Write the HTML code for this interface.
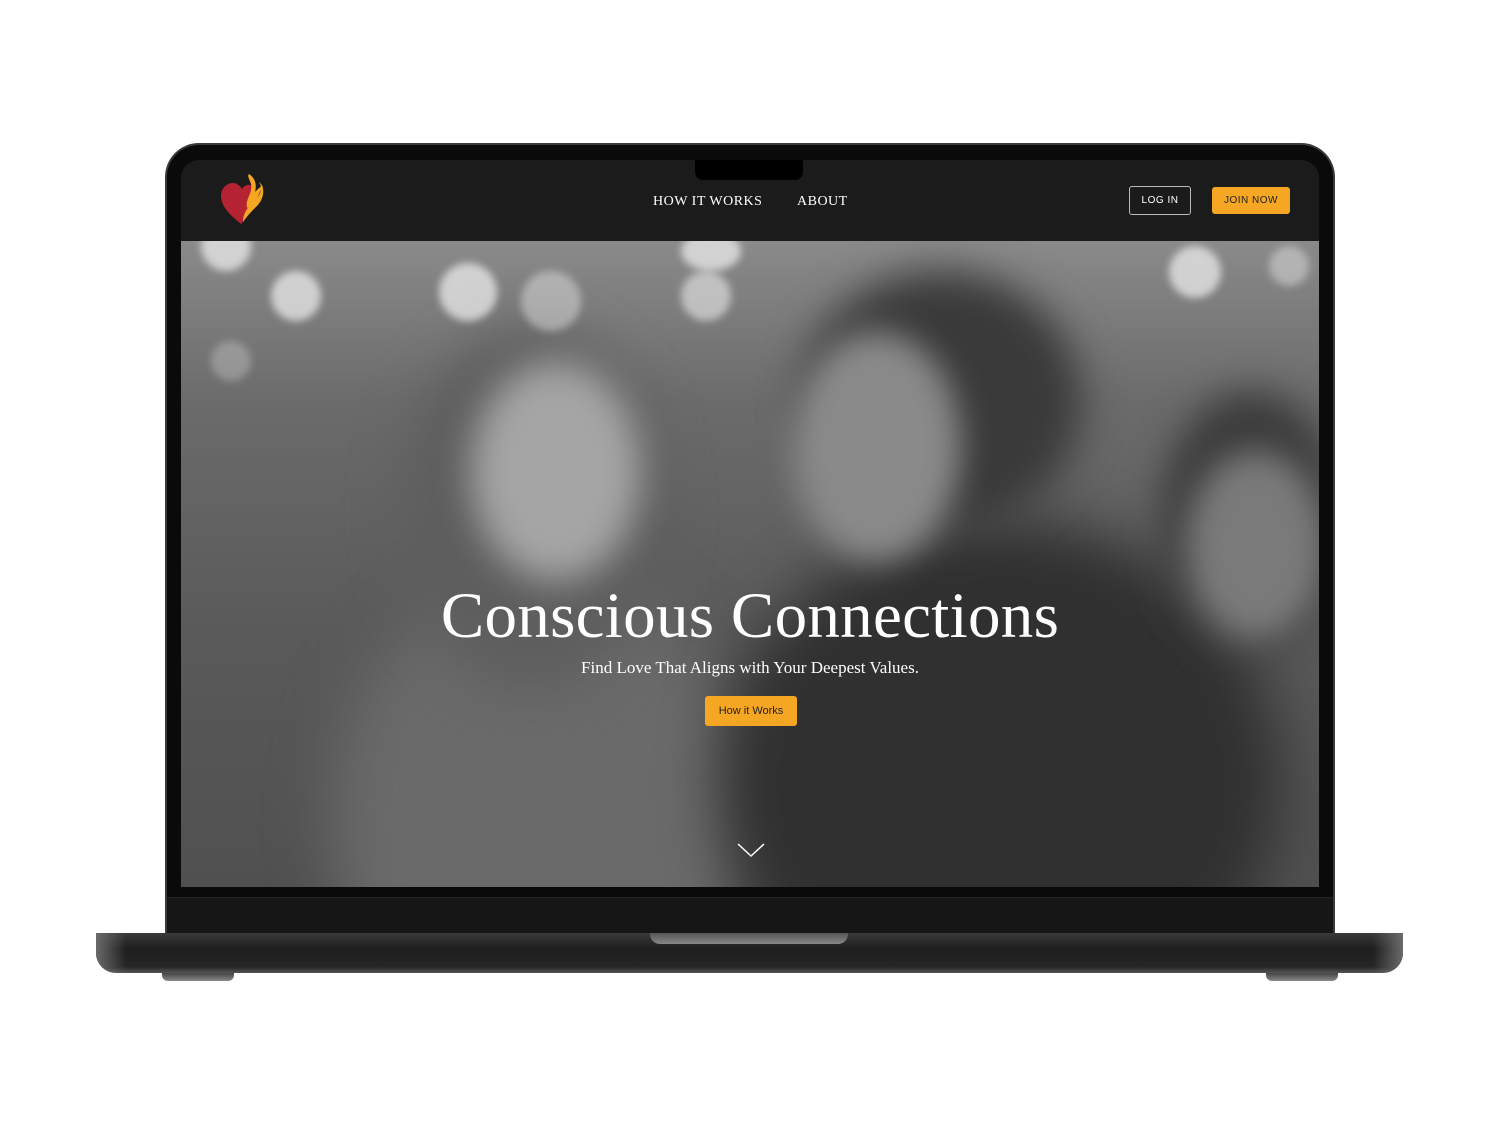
<!DOCTYPE html>
<html><head><meta charset="utf-8"><style>
*{margin:0;padding:0;box-sizing:border-box}
body{width:1500px;height:1125px;background:#fff;position:relative;overflow:hidden;font-family:"Liberation Sans",sans-serif}
.lid{position:absolute;left:165px;top:143px;width:1170px;height:792px;background:#0a0a0a;border-radius:34px 34px 0 0;border:2px solid #3a3a3a;border-bottom:none}
.screen{position:absolute;left:181px;top:160px;width:1138px;height:727px;border-radius:18px 18px 0 0;overflow:hidden;background:#1b1b1b}
.nav{position:absolute;left:0;top:0;width:100%;height:81px;background:#1b1b1b}
.notch{position:absolute;left:514px;top:0;width:108px;height:20px;background:#000;border-radius:0 0 8px 8px}
.hero{position:absolute;left:0;top:81px;width:100%;height:646px;overflow:hidden;
background:linear-gradient(180deg,#8a8a8a 0%,#6b6b6b 25%,#5a5a5a 60%,#505050 100%)}
.s{position:absolute;border-radius:50%}
.b{position:absolute;border-radius:50%;background:rgba(235,235,235,.75);filter:blur(4px)}
.nl{position:absolute;top:34px;color:#fff;font-family:"Liberation Serif",serif;font-size:14px;letter-spacing:.5px}
.btn{position:absolute;font-size:10px;letter-spacing:.5px;display:flex;align-items:center;justify-content:center;border-radius:3px}
h1{position:absolute;left:0;width:100%;top:338px;text-align:center;color:#fff;font-family:"Liberation Serif",serif;font-weight:400;font-size:65px;letter-spacing:.3px}
.sub{position:absolute;left:0;width:100%;top:417px;text-align:center;color:#fff;font-family:"Liberation Serif",serif;font-size:17px}
.chin{position:absolute;left:167px;top:897px;width:1166px;height:37px;background:#161616;border-top:1px solid #222}
.base{position:absolute;left:96px;top:933px;width:1307px;height:40px;border-radius:2px 2px 20px 20px;background:linear-gradient(180deg,#3a3a3a 0%,#1e1e1e 40%,#262626 85%,#555 100%)}
.base:before{content:"";position:absolute;left:0;top:0;width:30px;height:100%;border-radius:0 0 0 20px;background:linear-gradient(90deg,#6a6a6a,rgba(0,0,0,0))}
.base:after{content:"";position:absolute;right:0;top:0;width:30px;height:100%;border-radius:0 0 20px 0;background:linear-gradient(270deg,#6a6a6a,rgba(0,0,0,0))}
.lip{position:absolute;left:650px;top:933px;width:198px;height:11px;background:linear-gradient(#555,#888);border-radius:0 0 10px 10px}
.foot{position:absolute;top:973px;width:72px;height:8px;background:linear-gradient(#444,#888);border-radius:0 0 6px 6px}
</style></head><body>
<div class="lid"></div>
<div class="screen">
 <div class="nav">
  <svg style="position:absolute;left:38px;top:12px" width="48" height="54" viewBox="0 0 48 54">
   <path d="M22 52 C10 42 2 34 2 24 C2 16 8 11 14 11 C18 11 21 14 23 17 C25 14 28 12 31 13 C36 15 40 22 36 32 C32 41 26 47 22 52Z" fill="#b52231"/>
   <path d="M24 50 C24 40 30 34 36 28 C42 22 44 16 40 10 C46 14 46 26 38 34 C32 40 28 44 24 50Z" fill="#f5a623"/>
   <path d="M28 36 C26 26 34 22 32 12 C30 6 28 4 30 2 C36 6 38 12 36 20 C40 16 42 14 44 14 C40 20 40 28 28 36Z" fill="#f5a623"/>
  </svg>
  <div class="nl" style="left:472px">HOW IT WORKS</div>
  <div class="nl" style="left:616px">ABOUT</div>
  <div class="btn" style="left:948px;top:26px;width:62px;height:29px;border:1.5px solid #bbb;color:#fff">LOG IN</div>
  <div class="btn" style="left:1031px;top:27px;width:78px;height:27px;background:#f5a623;color:#222">JOIN NOW</div>
 </div>
 <div class="notch"></div>
 <div class="hero">
  <div class="s" style="left:150px;top:330px;width:420px;height:500px;background:#6a6a6a;filter:blur(30px)"></div>
  <div class="s" style="left:220px;top:90px;width:260px;height:360px;background:#5e5e5e;filter:blur(25px)"></div>
  <div class="s" style="left:290px;top:120px;width:170px;height:220px;background:#a5a5a5;filter:blur(18px)"></div>
  <div class="s" style="left:540px;top:280px;width:560px;height:520px;background:#303030;filter:blur(30px)"></div>
  <div class="s" style="left:620px;top:30px;width:280px;height:260px;background:#3a3a3a;filter:blur(20px)"></div>
  <div class="s" style="left:610px;top:90px;width:170px;height:230px;background:#8a8a8a;filter:blur(16px)"></div>
  <div class="s" style="left:980px;top:150px;width:180px;height:260px;background:#3c3c3c;filter:blur(18px)"></div>
  <div class="s" style="left:1005px;top:210px;width:140px;height:190px;background:#7a7a7a;filter:blur(16px)"></div>
  <div class="b" style="left:20px;top:-20px;width:50px;height:50px"></div>
  <div class="b" style="left:90px;top:30px;width:50px;height:50px"></div>
  <div class="b" style="left:258px;top:22px;width:58px;height:58px"></div>
  <div class="b" style="left:340px;top:30px;width:60px;height:60px;opacity:.6"></div>
  <div class="b" style="left:500px;top:-10px;width:60px;height:40px"></div>
  <div class="b" style="left:500px;top:30px;width:50px;height:50px;opacity:.8"></div>
  <div class="b" style="left:988px;top:5px;width:52px;height:52px"></div>
  <div class="b" style="left:1088px;top:5px;width:40px;height:40px;opacity:.6"></div>
  <div class="b" style="left:30px;top:100px;width:40px;height:40px;opacity:.4"></div>
  <h1>Conscious Connections</h1>
  <div class="sub">Find Love That Aligns with Your Deepest Values.</div>
  <div class="btn" style="left:524px;top:455px;width:92px;height:30px;background:#f5a623;color:#222;font-size:11px;letter-spacing:0">How it Works</div>
  <svg style="position:absolute;left:555px;top:600px" width="30" height="18"><path d="M2 3 L15 15 L28 3" fill="none" stroke="#fff" stroke-width="1.5"/></svg>
 </div>
</div>
<div class="chin"></div>
<div class="base"></div>
<div class="lip"></div>
<div class="foot" style="left:162px"></div>
<div class="foot" style="left:1266px"></div>
</body></html>
